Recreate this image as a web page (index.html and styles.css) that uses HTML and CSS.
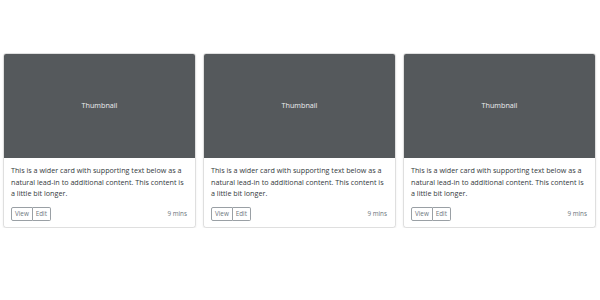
FILE: index.html
```html
<!DOCTYPE html>
<html lang="en">
<head>
    <meta charset="UTF-8">
    <meta name="viewport" content="width=device-width, initial-scale=1.0">
    <title>Album</title>
    <link rel="stylesheet" href="styles.css">
</head>
<body>

    <div class="album">
        <div class="row">
            <!-- Card 1 -->
            <div class="card">
                <div class="thumb">Thumbnail</div>
                <div class="card-body">
                    <p class="card-text">This is a wider card with supporting text below as a natural lead-in to additional content. This content is a little bit longer.</p>
                    <div class="card-footer">
                        <div class="btn-group">
                            <button class="btn">View</button>
                            <button class="btn">Edit</button>
                        </div>
                        <small class="muted">9 mins</small>
                    </div>
                </div>
            </div>

            <!-- Card 2 -->
            <div class="card">
                <div class="thumb">Thumbnail</div>
                <div class="card-body">
                    <p class="card-text">This is a wider card with supporting text below as a natural lead-in to additional content. This content is a little bit longer.</p>
                    <div class="card-footer">
                        <div class="btn-group">
                            <button class="btn">View</button>
                            <button class="btn">Edit</button>
                        </div>
                        <small class="muted">9 mins</small>
                    </div>
                </div>
            </div>

            <!-- Card 3 -->
            <div class="card">
                <div class="thumb">Thumbnail</div>
                <div class="card-body">
                    <p class="card-text">This is a wider card with supporting text below as a natural lead-in to additional content. This content is a little bit longer.</p>
                    <div class="card-footer">
                        <div class="btn-group">
                            <button class="btn">View</button>
                            <button class="btn">Edit</button>
                        </div>
                        <small class="muted">9 mins</small>
                    </div>
                </div>
            </div>
        </div>
    </div>

</body>
</html>
```

FILE: styles.css
```css
body {
    margin: 0;
    font-family: "Open Sans", Arial, sans-serif;
    font-size: 7.2px;
    line-height: 11.5px;
    color: #343a40;
    background-color: #fff;
}
.album {
    padding: 53px 0 0 3px;
}
.row {
    display: flex;
    gap: 7px;
}
.card {
    width: 193px;
    box-sizing: border-box;
    border: 1px solid rgba(0, 0, 0, 0.125);
    border-radius: 3px;
    box-shadow: 0 1px 2px rgba(0, 0, 0, 0.08);
    overflow: hidden;
}
.thumb {
    height: 104px;
    background-color: #55595c;
    color: #eceeef;
    display: flex;
    align-items: center;
    justify-content: center;
    font-size: 7.2px;
}
.card-body {
    padding: 7px 7px 6px;
}
.card-text {
    margin: 0 0 7px;
}
.card-footer {
    display: flex;
    justify-content: space-between;
    align-items: center;
}
.btn-group {
    display: flex;
}
.btn {
    font-family: inherit;
    font-size: 6.3px;
    line-height: 9px;
    padding: 1.5px 3px;
    margin: 0;
    color: #6c757d;
    background-color: transparent;
    border: 1px solid #9aa0a5;
    border-radius: 0;
}
.btn:first-child {
    border-radius: 2px 0 0 2px;
}
.btn:last-child {
    border-left: 0;
    border-radius: 0 2px 2px 0;
}
.muted {
    color: #6c757d;
    font-size: 6.3px;
    padding-right: 1px;
}
```
